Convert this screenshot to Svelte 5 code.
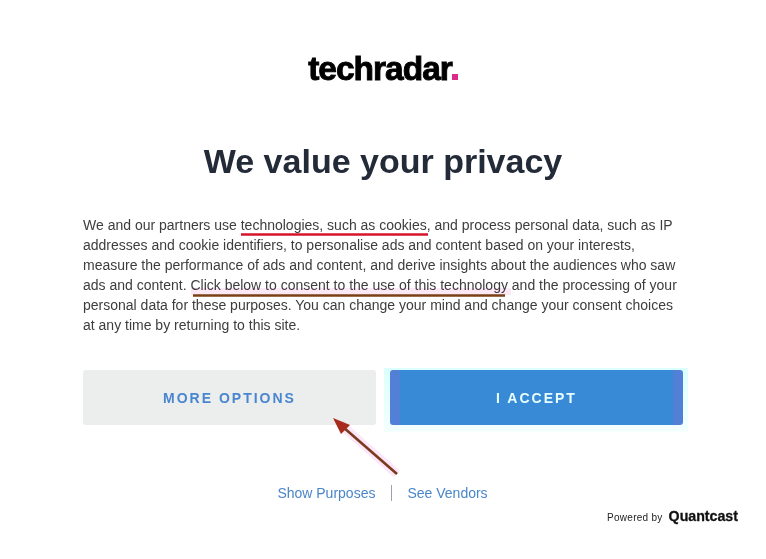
<script>
  const paragraphStart = "We and our partners use technologies, such as cookies, and process personal data, such as IP addresses and cookie identifiers, to personalise ads and content based on your interests, measure the performance of ads and content, and derive insights about the audiences who saw ads and content. Click below to consent to the use of this technology and the processing of your personal data for these purposes. You can change your mind and change your consent choices at any time by returning to this site.";
</script>

<main class="page">
  <div class="logo"><span class="logo-text">techradar</span><span class="logo-dot"></span></div>
  <h1>We value your privacy</h1>
  <p class="copy">{paragraphStart}</p>
  <div class="actions">
    <button class="more">MORE OPTIONS</button>
    <div class="accept-halo"><button class="accept">I ACCEPT</button></div>
  </div>
  <nav class="links">
    <a href="#p">Show Purposes</a>
    <span class="sep"></span>
    <a href="#v">See Vendors</a>
  </nav>
  <div class="powered">
    <span class="by">Powered by</span>
    <span class="brand">Quantcast</span>
  </div>

  <svg class="marks" width="766" height="559" viewBox="0 0 766 559" aria-hidden="true">
    <rect x="191" y="288" width="320" height="7" fill="#fde8f6" style="mix-blend-mode:multiply" />
    <path d="M397 474 L340 424" stroke="#fde6f8" stroke-width="9" fill="none" style="mix-blend-mode:multiply" />
    <path d="M241 234.5 L428 234.5" stroke="#d5142a" stroke-width="2.4" fill="none" />
    <path d="M193 295.5 L505 295.5" stroke="#7a4016" stroke-width="2.6" fill="none" />
    <path d="M397 474 L343 427" stroke="#7a3a1e" stroke-width="2.6" fill="none" />
    <path d="M333 418 L350 425 L341 434 Z" fill="#a82a1c" />
  </svg>
</main>

<style>
  :global(body) {
    margin: 0;
    background: #fff;
  }
  .page {
    position: relative;
    box-sizing: border-box;
    width: 766px;
    height: 559px;
    padding: 52px 83px 0;
    overflow: hidden;
    font-family: "Liberation Sans", Arial, sans-serif;
  }
  .logo {
    display: flex;
    justify-content: center;
    align-items: baseline;
    height: 34px;
  }
  .logo-text {
    font-size: 33.5px;
    line-height: 34px;
    font-weight: 700;
    letter-spacing: -1px;
    color: #000;
    -webkit-text-stroke: 0.9px #000;
  }
  .logo-dot {
    width: 6px;
    height: 6px;
    background: #dc2a8a;
  }
  h1 {
    margin: 54px 0 0;
    font-size: 34px;
    line-height: 42px;
    font-weight: 700;
    text-align: center;
    color: #232a38;
  }
  .copy {
    margin: 33px 0 0;
    font-size: 14px;
    line-height: 20px;
    color: #3d3d3d;
  }
  .actions {
    display: flex;
    gap: 14px;
    margin-top: 35px;
  }
  button {
    width: 293px;
    height: 55px;
    padding: 0;
    border: 0;
    border-radius: 3px;
    font: 700 14px "Liberation Sans", Arial, sans-serif;
    letter-spacing: 2px;
    text-align: center;
  }
  .more {
    background: #eceded;
    color: #4a86d0;
  }
  .accept-halo {
    display: flex;
    background: linear-gradient(to bottom, #dcffff, #f4ffff);
    margin: -2px -5px -7px -6px;
    padding: 2px 5px 7px 6px;
  }
  .accept {
    background: linear-gradient(to right, #5280d6 10px, #388ad6 10px, #388ad6 283px, #5280d6 283px);
    color: #e8ffff;
  }
  .links {
    display: flex;
    justify-content: center;
    align-items: center;
    gap: 15px;
    margin-top: 58px;
    padding-right: 1px;
    font-size: 14px;
    line-height: 20px;
  }
  .links a {
    color: #4a86c8;
    text-decoration: none;
  }
  .sep {
    width: 1px;
    height: 16px;
    margin-left: 1px;
    background: #9aa3ab;
  }
  .powered {
    position: absolute;
    right: 28px;
    top: 508px;
    display: flex;
    align-items: baseline;
    gap: 6px;
    color: #222;
  }
  .by {
    font-size: 10px;
    letter-spacing: 0.28px;
  }
  .brand {
    font-size: 14.2px;
    font-weight: 700;
    color: #111;
    -webkit-text-stroke: 0.3px #111;
  }
  .marks {
    position: absolute;
    inset: 0;
    pointer-events: none;
  }
</style>
